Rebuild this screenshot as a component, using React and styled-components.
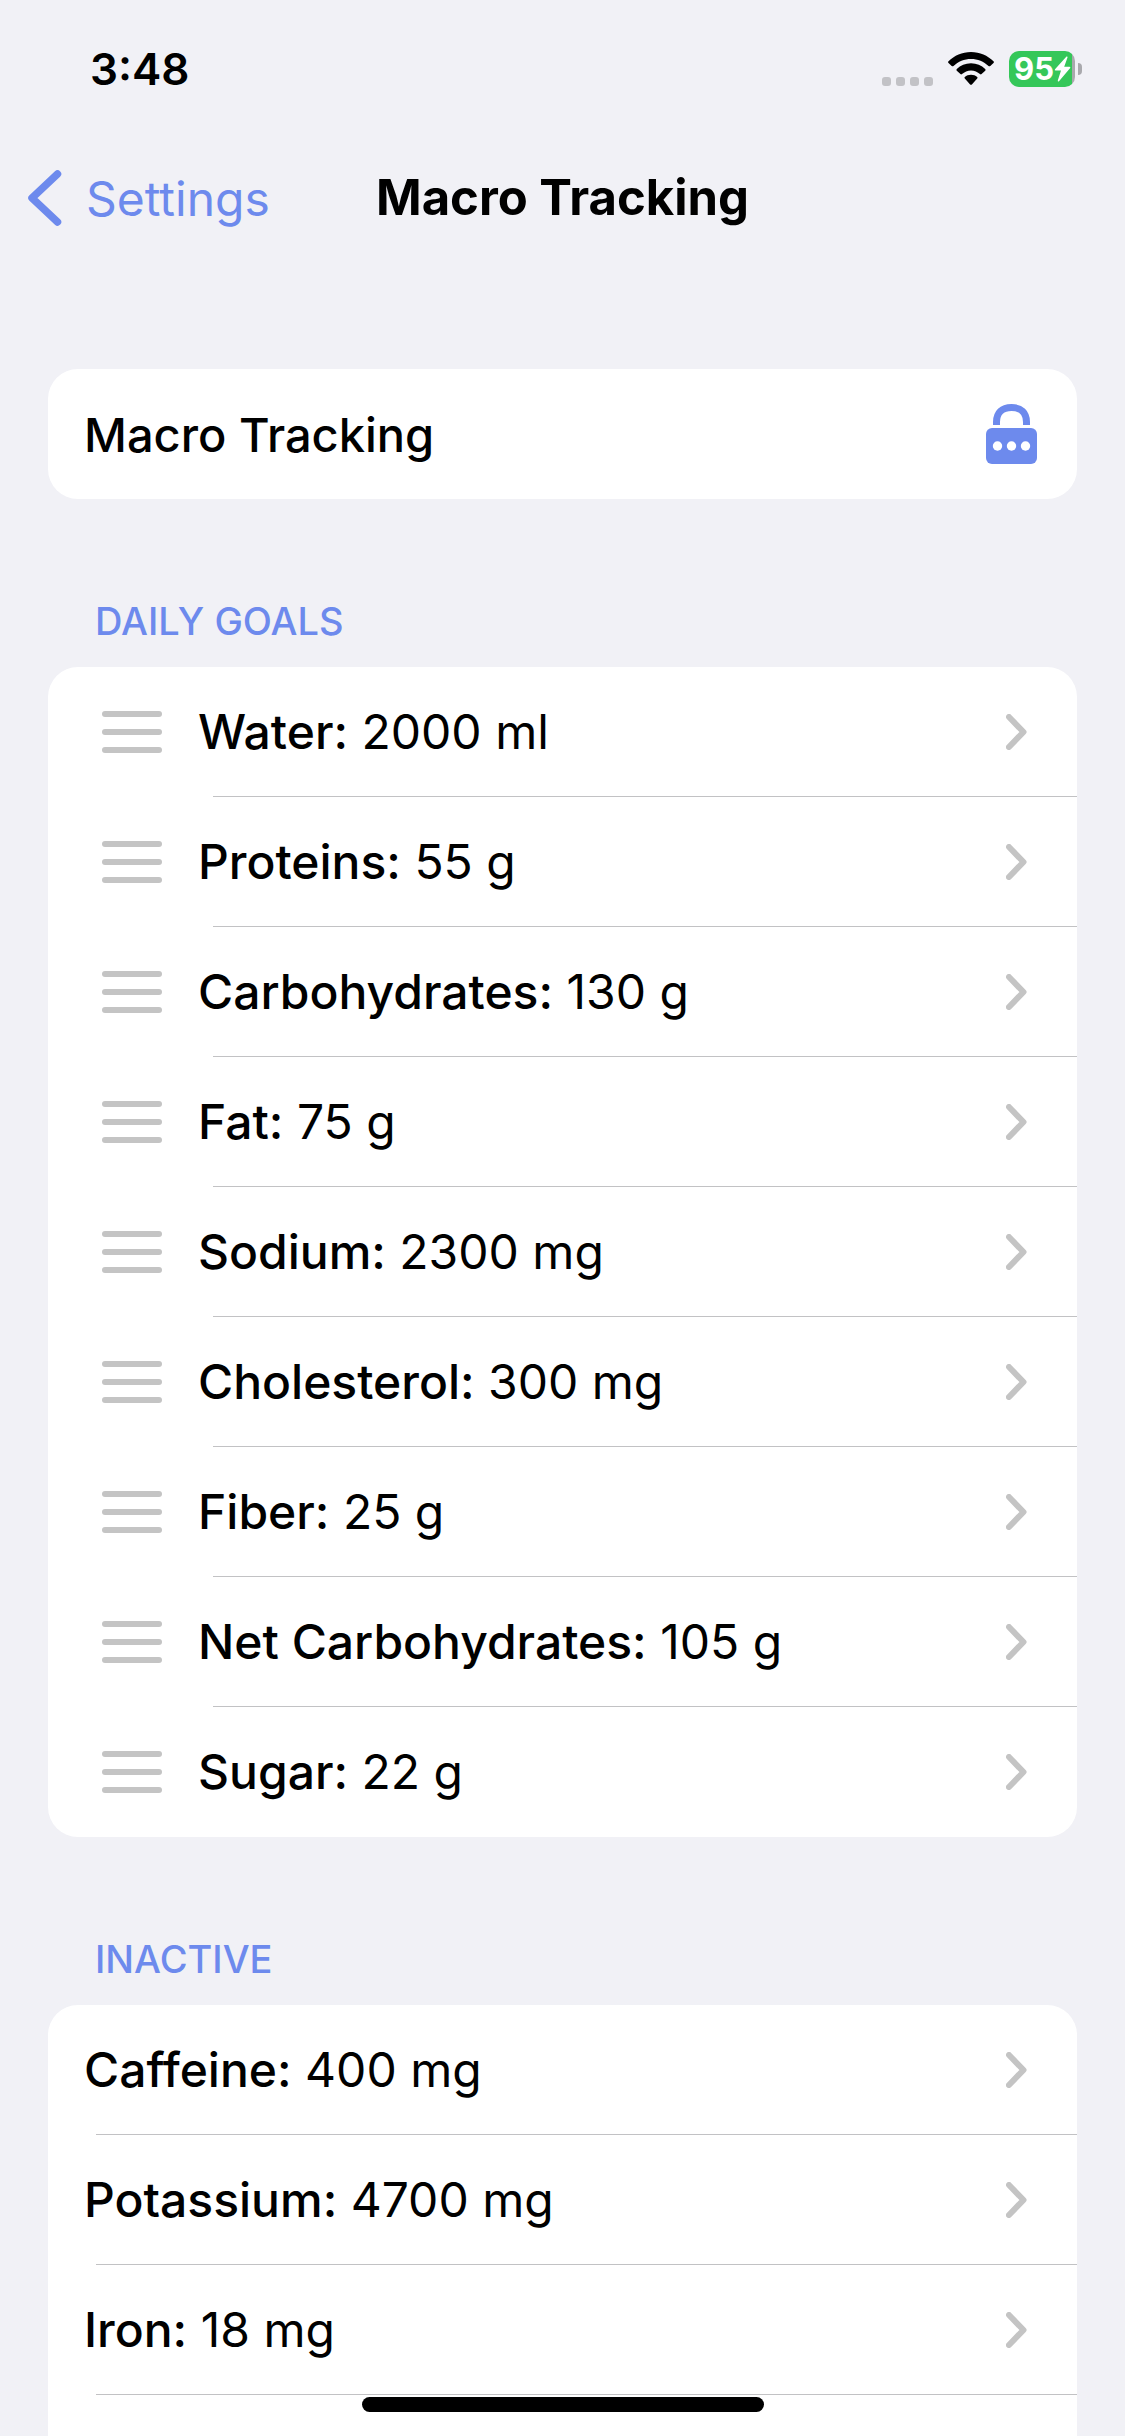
import React from "react";
import styled, { createGlobalStyle } from "styled-components";

const GlobalStyle = createGlobalStyle`
  :root {
    --accent: #6d8aed;
    --background: #f1f1f6;
    --gray: #c4c4c4;
    --separator: #c2c2c4;
  }

  * {
    box-sizing: border-box;
  }

  body {
    margin: 0;
    background: var(--background);
    color: #000;
    font-family: Inter, "Liberation Sans", sans-serif;
    font-size: 48px;
  }

  button {
    padding: 0;
    border: none;
    background: none;
    color: inherit;
    font: inherit;
    text-align: left;
    cursor: pointer;
  }

  svg {
    display: block;
    flex-shrink: 0;
  }
`;

const Screen = styled.div`
  min-height: 100vh;
  display: flex;
  flex-direction: column;
`;

const StatusBar = styled.div`
  height: 138px;
  padding: 0 43px 0 90px;
  display: flex;
  align-items: center;
  justify-content: space-between;
`;

const Time = styled.time`
  font-size: 44px;
  font-weight: 600;
  line-height: 56px;
`;

const StatusIcons = styled.div`
  display: flex;
  align-items: center;
  gap: 15px;
`;

const SignalDots = styled.div`
  display: flex;
  gap: 5px;
  padding-top: 24px;

  span {
    width: 9px;
    height: 9px;
    border-radius: 3px;
    background: #c2c2c6;
  }
`;

const Battery = styled.div`
  display: flex;
  align-items: center;
  gap: 3px;

  .body {
    width: 66px;
    height: 36px;
    padding-left: 5px;
    border-radius: 10px;
    display: flex;
    align-items: center;
    background: linear-gradient(to right, #35c759 95%, #a9a9ad 95%);
    color: #fff;
    font-size: 31px;
    font-weight: 700;
    line-height: 36px;
  }

  .tip {
    width: 4px;
    height: 12px;
    border-radius: 0 4px 4px 0;
    background: #a9a9ad;
  }
`;

const NavBar = styled.header`
  height: 120px;
  padding: 0 28px;
  display: grid;
  grid-template-columns: 1fr auto 1fr;
  align-items: center;
`;

const BackLink = styled.a`
  display: flex;
  align-items: center;
  gap: 24px;
  color: var(--accent);
  text-decoration: none;
`;

const NavTitle = styled.h1`
  margin: 0;
  font-size: 49px;
  font-weight: 700;
  line-height: 60px;
`;

const Content = styled.main`
  flex: 1;
  padding: 111px 48px 0;
  display: flex;
  flex-direction: column;
`;

const Card = styled.div`
  border-radius: ${({ $open }) => ($open ? "30px 30px 0 0" : "30px")};
  background: #fff;
  flex: ${({ $open }) => ($open ? "1 0 auto" : "none")};
`;

const LockedRow = styled.button`
  width: 100%;
  height: 130px;
  padding: 0 40px 0 36px;
  display: flex;
  align-items: center;
  justify-content: space-between;
  font-size: 47px;
  font-weight: 500;
`;

const SectionTitle = styled.h2`
  height: 168px;
  margin: 0;
  padding: 0 47px 22px;
  display: flex;
  align-items: flex-end;
  color: var(--accent);
  font-size: 38px;
  font-weight: 500;
  line-height: 48px;
  text-transform: uppercase;
`;

const List = styled.ul`
  margin: 0;
  padding: 0;
  list-style: none;
`;

const Item = styled.li`
  height: 130px;
  display: flex;
  flex-direction: column;

  &::after {
    content: "";
    height: 1px;
    margin-left: ${({ $sortable }) => ($sortable ? "165px" : "48px")};
    background: var(--separator);
  }

  &:last-child::after {
    background: ${({ $sortable }) =>
      $sortable ? "transparent" : "var(--separator)"};
  }
`;

const ItemRow = styled.div`
  flex: 1;
  display: flex;
  align-items: stretch;
`;

const DragHandle = styled.button`
  padding: 0 0 0 54px;
  display: flex;
  align-items: center;
  cursor: grab;
`;

const GoalButton = styled.button`
  flex: 1;
  padding: 0 50px 0 36px;
  display: flex;
  align-items: center;
  justify-content: space-between;

  strong {
    font-weight: 500;
  }
`;

const HomeIndicator = styled.div`
  position: fixed;
  left: 50%;
  bottom: 24px;
  width: 402px;
  height: 15px;
  margin-left: -201px;
  border-radius: 8px;
  background: #000;
`;

const BackIcon = () => (
  <svg width="34" height="56" viewBox="0 0 34 56" fill="none" aria-hidden="true">
    <path
      d="M29.500 4 4 28l25.500 24"
      stroke="currentColor"
      strokeWidth="7.500"
      strokeLinecap="round"
      strokeLinejoin="round"
    />
  </svg>
);

const ChevronIcon = () => (
  <svg width="21" height="36" viewBox="0 0 21 36" fill="none" aria-hidden="true">
    <path
      d="M3 3l14.500 15L3 33"
      stroke="var(--gray)"
      strokeWidth="6"
      strokeLinecap="round"
      strokeLinejoin="round"
    />
  </svg>
);

const HandleIcon = () => (
  <svg width="60" height="42" viewBox="0 0 60 42" aria-hidden="true">
    <g fill="var(--gray)">
      <rect width="60" height="6" rx="3" />
      <rect y="18" width="60" height="6" rx="3" />
      <rect y="36" width="60" height="6" rx="3" />
    </g>
  </svg>
);

const LockIcon = () => (
  <svg width="51" height="60" viewBox="0 0 51 60" role="img" aria-label="Locked">
    <path
      d="M10.500 21v-3C10.500 9 16 3.500 25.500 3.500S40.500 9 40.500 18v3"
      fill="none"
      stroke="var(--accent)"
      strokeWidth="7"
    />
    <rect y="24" width="51" height="36" rx="6" fill="var(--accent)" />
    <circle cx="11.500" cy="42" r="4.700" fill="#fff" />
    <circle cx="25.500" cy="42" r="4.700" fill="#fff" />
    <circle cx="39.500" cy="42" r="4.700" fill="#fff" />
  </svg>
);

const WifiIcon = () => (
  <svg width="46" height="34" viewBox="0 0 46 34" role="img" aria-label="Wi-Fi">
    <path d="M23 0C32 0 39.600 3.600 45.500 9.200Q46.400 10 45.500 10.900L42.300 14Q41.400 14.700 40.500 14C35.700 9.600 29.800 7 23 7S10.300 9.600 5.500 14Q4.600 14.700 3.700 14L.5 10.900Q-.4 10 .5 9.200C6.400 3.600 14 0 23 0Z" />
    <path d="M23 11.300C28.700 11.300 33.400 13.500 37.200 17Q38.100 17.900 37.200 18.800L33.600 22.100Q32.800 22.800 32 22.100C29.500 19.800 26.500 18.400 23 18.400S16.500 19.800 14 22.100Q13.200 22.800 12.400 22.100L8.800 18.800Q7.900 17.900 8.800 17C12.600 13.500 17.300 11.300 23 11.300Z" />
    <path d="M23 22.800C25.600 22.800 27.500 23.600 29.200 25Q30 25.800 29.200 26.600L23.900 32.400Q23 33.300 22.100 32.400L16.800 26.600Q16 25.800 16.800 25C18.500 23.600 20.400 22.800 23 22.800Z" />
  </svg>
);

const BoltIcon = () => (
  <svg width="17" height="26" viewBox="0 0 17 26" fill="#fff" aria-hidden="true">
    <path d="M12.500.5 1 13.300Q.3 14.400 1.500 14.600H7L3.800 24.500Q3.700 26 5 25.200L16.200 12Q16.800 10.900 15.600 10.700H10.200L13.500 1.500Q13.700 0 12.500.5Z" />
  </svg>
);

const dailyGoals = [
  { name: "Water", amount: "2000 ml" },
  { name: "Proteins", amount: "55 g" },
  { name: "Carbohydrates", amount: "130 g" },
  { name: "Fat", amount: "75 g" },
  { name: "Sodium", amount: "2300 mg" },
  { name: "Cholesterol", amount: "300 mg" },
  { name: "Fiber", amount: "25 g" },
  { name: "Net Carbohydrates", amount: "105 g" },
  { name: "Sugar", amount: "22 g" },
];

const inactiveGoals = [
  { name: "Caffeine", amount: "400 mg" },
  { name: "Potassium", amount: "4700 mg" },
  { name: "Iron", amount: "18 mg" },
];

const GoalList = ({ goals, sortable }) => (
  <List>
    {goals.map((goal) => (
      <Item key={goal.name} $sortable={sortable}>
        <ItemRow>
          {sortable && (
            <DragHandle type="button" aria-label={`Reorder ${goal.name}`}>
              <HandleIcon />
            </DragHandle>
          )}
          <GoalButton type="button">
            <span>
              <strong>{goal.name}:</strong> {goal.amount}
            </span>
            <ChevronIcon />
          </GoalButton>
        </ItemRow>
      </Item>
    ))}
  </List>
);

const App = () => {
  return (
    <Screen>
      <GlobalStyle />
      <StatusBar>
        <Time>3:48</Time>
        <StatusIcons>
          <SignalDots>
            <span />
            <span />
            <span />
            <span />
          </SignalDots>
          <WifiIcon />
          <Battery>
            <div className="body">
              95
              <BoltIcon />
            </div>
            <div className="tip" />
          </Battery>
        </StatusIcons>
      </StatusBar>

      <NavBar>
        <BackLink href="#settings">
          <BackIcon />
          Settings
        </BackLink>
        <NavTitle>Macro Tracking</NavTitle>
      </NavBar>

      <Content>
        <Card>
          <LockedRow type="button">
            Macro Tracking
            <LockIcon />
          </LockedRow>
        </Card>

        <SectionTitle>Daily Goals</SectionTitle>
        <Card>
          <GoalList goals={dailyGoals} sortable />
        </Card>

        <SectionTitle>Inactive</SectionTitle>
        <Card $open>
          <GoalList goals={inactiveGoals} />
        </Card>
      </Content>

      <HomeIndicator />
    </Screen>
  );
};

export default App;
